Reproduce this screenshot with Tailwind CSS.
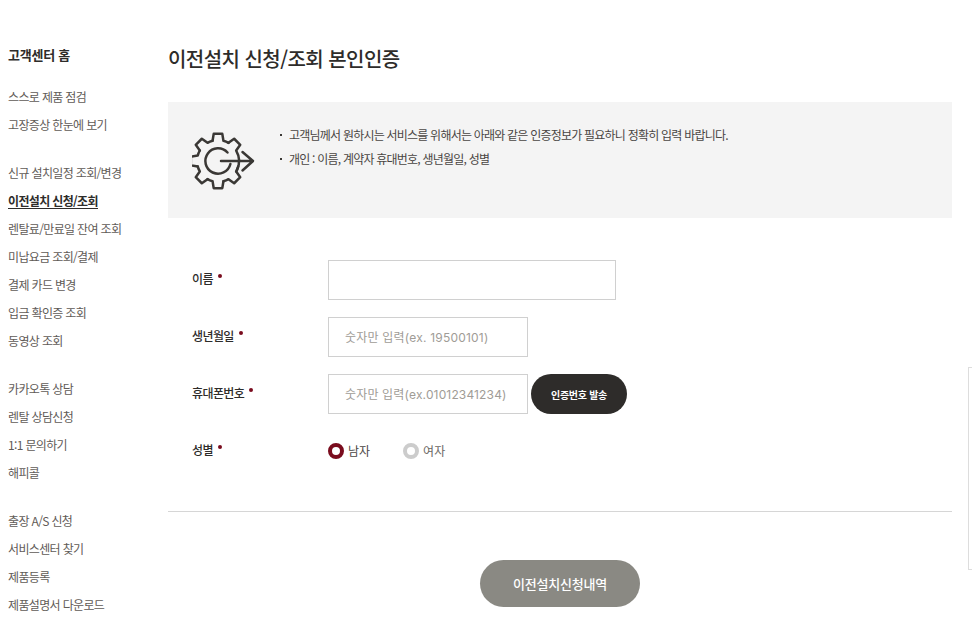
<!DOCTYPE html>
<html lang="ko">
<head>
    <meta charset="UTF-8">
    <script src="https://cdn.jsdelivr.net/npm/@tailwindcss/browser@4"></script>
</head>
<body class="bg-white">
<div class="relative flex h-[631px] w-[972px] overflow-hidden font-['Noto_Sans_CJK_KR','Noto_Sans',sans-serif] text-[#2e2c2a]">

    <!--사이드 메뉴-->
    <nav class="w-[168px] shrink-0 pl-2 pt-[43px] text-[12px] tracking-[-0.65px] text-[#5f5b57]">
        <h2 class="mb-[16px] h-6 text-[13px] font-bold leading-6 tracking-[-0.25px] text-[#2e2c2a]">고객센터 홈</h2>
        <ul class="mb-5">
            <li class="h-7 leading-7">스스로 제품 점검</li>
            <li class="h-7 leading-7">고장증상 한눈에 보기</li>
        </ul>
        <ul class="mb-5">
            <li class="h-7 leading-7">신규 설치일정 조회/변경</li>
            <li class="h-7 leading-7"><span class="inline-block h-[22px] border-b border-[#2e2c2a] font-bold leading-[28px] text-[#2e2c2a]">이전설치 신청/조회</span></li>
            <li class="h-7 leading-7">렌탈료/만료일 잔여 조회</li>
            <li class="h-7 leading-7">미납요금 조회/결제</li>
            <li class="h-7 leading-7">결제 카드 변경</li>
            <li class="h-7 leading-7">입금 확인증 조회</li>
            <li class="h-7 leading-7">동영상 조회</li>
        </ul>
        <ul class="mb-5">
            <li class="h-7 leading-7">카카오톡 상담</li>
            <li class="h-7 leading-7">렌탈 상담신청</li>
            <li class="h-7 leading-7">1:1 문의하기</li>
            <li class="h-7 leading-7">해피콜</li>
        </ul>
        <ul>
            <li class="h-7 leading-7">출장 A/S 신청</li>
            <li class="h-7 leading-7">서비스센터 찾기</li>
            <li class="h-7 leading-7">제품등록</li>
            <li class="h-7 leading-7">제품설명서 다운로드</li>
        </ul>
    </nav>

    <main class="w-[784px] shrink-0">
        <h1 class="mt-[43px] h-[32px] text-[20px] font-medium leading-[32px] tracking-[-0.55px]">이전설치 신청/조회 본인인증</h1>

        <!--안내 박스-->
        <div class="mt-[27px] flex h-[116px] items-start bg-[#f4f4f4] pl-6">
            <svg class="mt-[27px] h-16 w-16 shrink-0" viewBox="0 0 64 64" fill="none" stroke="#3a3835" stroke-width="2.5" stroke-linejoin="round" stroke-linecap="round">
                <g transform="translate(26 32)">
                    <path d="M-5.44 -20.28 L-4.3 -27.16 H4.3 L5.44 -20.28 A21 21 0 0 1 10.5 -18.19"/>
                    <path d="M-5.44 -20.28 L-4.3 -27.16 H4.3 L5.44 -20.28 A21 21 0 0 1 10.5 -18.19" transform="rotate(-45)"/>
                    <path d="M-5.44 -20.28 L-4.3 -27.16 H4.3 L5.44 -20.28 A21 21 0 0 1 10.5 -18.19" transform="rotate(-90)"/>
                    <path d="M-5.44 -20.28 L-4.3 -27.16 H4.3 L5.44 -20.28 A21 21 0 0 1 10.5 -18.19" transform="rotate(-135)"/>
                    <path d="M-5.44 -20.28 L-4.3 -27.16 H4.3 L5.44 -20.28 A21 21 0 0 1 10.5 -18.19" transform="rotate(180)"/>
                    <path d="M-5.44 -20.28 L-4.3 -27.16 H4.3 L5.44 -20.28 A21 21 0 0 1 10.5 -18.19" transform="rotate(135)"/>
                    <path d="M-5.44 -20.28 L-4.3 -27.16 H4.3 L5.44 -20.28 A21 21 0 0 1 19.7 -7.2" transform="rotate(45)"/>
                    <path d="M20.3 5.4 A21 21 0 0 1 18.19 10.5"/>
                    <path d="M9.5 -8.5 A12.7 12.7 0 1 0 12.4 3"/>
                </g>
                <path d="M29 32 H60.5 M50.5 23 L61 32 L50.5 41.5" stroke-width="2.5"/>
            </svg>
            <ul class="ml-[24px] mt-[21px] text-[12px] tracking-[-0.78px] text-[#4a4643]">
                <li class="flex h-6 items-center"><span class="mr-[7px] h-[2px] w-[2px] bg-[#3a3835]"></span>고객님께서 원하시는 서비스를 위해서는 아래와 같은 인증정보가 필요하니 정확히 입력 바랍니다.</li>
                <li class="flex h-6 items-center"><span class="mr-[7px] h-[2px] w-[2px] bg-[#3a3835]"></span>개인 : 이름, 계약자 휴대번호, 생년월일, 성별</li>
            </ul>
        </div>

        <!--본인인증 폼-->
        <form class="mt-[42px] pl-6">
            <div class="flex h-10 items-center">
                <label class="flex w-[136px] items-center pb-[2px] text-[12px] font-medium tracking-[-0.6px]">이름<span class="mb-[6px] ml-[5px] h-1 w-1 rounded-full bg-[#7a0c1e]"></span></label>
                <input type="text" class="h-10 w-[288px] border border-[#d0d0d0] bg-white">
            </div>
            <div class="mt-[17px] flex h-10 items-center">
                <label class="flex w-[136px] items-center pb-[2px] text-[12px] font-medium tracking-[-0.6px]">생년월일<span class="mb-[6px] ml-[5px] h-1 w-1 rounded-full bg-[#7a0c1e]"></span></label>
                <input type="text" placeholder="숫자만 입력(ex. 19500101)" class="h-10 w-[200px] border border-[#d0d0d0] bg-white pl-4 font-['Inter','Noto_Sans_CJK_KR',sans-serif] text-[12px] tracking-[0.2px] placeholder:text-[#a09c96]">
            </div>
            <div class="mt-[17px] flex h-10 items-center">
                <label class="flex w-[136px] items-center pb-[2px] text-[12px] font-medium tracking-[-0.6px]">휴대폰번호<span class="mb-[6px] ml-[5px] h-1 w-1 rounded-full bg-[#7a0c1e]"></span></label>
                <input type="text" placeholder="숫자만 입력(ex.01012341234)" class="h-10 w-[200px] border border-[#d0d0d0] bg-white pl-4 font-['Inter','Noto_Sans_CJK_KR',sans-serif] text-[12px] tracking-[0.15px] placeholder:text-[#a09c96]">
                <button type="button" class="ml-[3px] h-10 w-24 rounded-full bg-[#2e2c2a] text-[10px] font-bold tracking-[-0.3px] text-white">인증번호 발송</button>
            </div>
            <div class="mt-[17px] flex h-[40px] items-center">
                <label class="flex w-[136px] items-center pb-[2px] text-[12px] font-medium tracking-[-0.6px]">성별<span class="mb-[6px] ml-[5px] h-1 w-1 rounded-full bg-[#7a0c1e]"></span></label>
                <span class="h-4 w-4 rounded-full border-[4px] border-[#7a0c1e] bg-white"></span>
                <span class="ml-1 text-[12px] text-[#4a4643]">남자</span>
                <span class="ml-[33px] h-4 w-4 rounded-full border-[4px] border-[#cccccc] bg-white"></span>
                <span class="ml-[4px] text-[12px] text-[#6b6763]">여자</span>
            </div>
        </form>

        <div class="mt-[40px] border-t border-[#d6d6d6]"></div>

        <div class="mt-[48px] flex justify-center">
            <button type="button" class="h-[47px] w-40 rounded-full bg-[#8a8983] text-[13px] font-medium tracking-[-0.2px] text-white">이전설치신청내역</button>
        </div>
    </main>

    <!--오른쪽 플로팅 패널 가장자리-->
    <div class="absolute left-[968px] top-[367px] h-[203px] w-1 border-y border-l border-[#dddddd]"></div>
</div>
</body>
</html>
